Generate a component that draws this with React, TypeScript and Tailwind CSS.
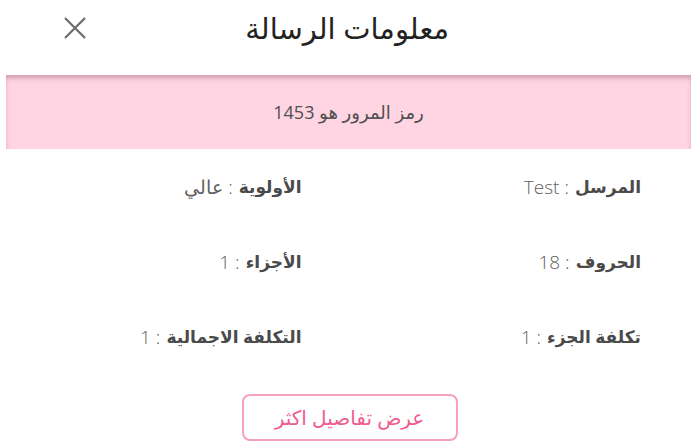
import React from "react";

const font = { fontFamily: '"Open Sans", "DejaVu Sans", sans-serif' };

function Row({ label, value }: { label: string; value: string }) {
  return (
    <div className="flex items-center gap-[6px] h-[24px]">
      <span className="font-bold text-[17px] text-[#4a4a4a]">{label}</span>
      <span className="text-[19px] font-light text-[#5f5f5f]">: {value}</span>
    </div>
  );
}

export default function App() {
  return (
    <div dir="rtl" className="w-[691px] h-[448px] bg-white relative overflow-hidden" style={font}>
      <div className="h-[75px] flex items-start pt-[8px]">
        <div className="w-[242px]" />
        <h1 className="text-[29px] leading-[40px] text-[#222] font-normal">معلومات الرسالة</h1>
        <button className="absolute left-[62px] top-[15px]">
          <svg width="26" height="26" viewBox="0 0 26 26" fill="none" stroke="#6b6b6b" strokeWidth="2.2">
            <path d="M3 3 L23 23 M23 3 L3 23" />
          </svg>
        </button>
      </div>
      <div className="flex">
        <div className="flex-1 h-[74px] bg-[#ffd5e3] shadow-[inset_0_4px_5px_-1px_rgba(150,80,110,0.45)] flex items-center justify-center text-[18px] text-[#4f4f4f]">
          رمز المرور هو 1453
        </div>
        <div className="w-[6px]" />
      </div>
      <div className="grid grid-cols-2 pr-[50px] pl-[50px] mt-[26px] gap-y-[51px]">
        <Row label="المرسل" value="Test" />
        <div className="pr-[44px]"><Row label="الأولوية" value="عالي" /></div>
        <Row label="الحروف" value="18" />
        <div className="pr-[44px]"><Row label="الأجزاء" value="1" /></div>
        <Row label="تكلفة الجزء" value="1" />
        <div className="pr-[44px]"><Row label="التكلفة الاجمالية" value="1" /></div>
      </div>
      <div className="flex justify-center mt-[45px] pl-[8px]">
        <button className="w-[216px] h-[47px] border-2 border-[#f6a0be] rounded-[8px] text-[#ef5d8f] text-[20px]">
          عرض تفاصيل اكثر
        </button>
      </div>
    </div>
  );
}
